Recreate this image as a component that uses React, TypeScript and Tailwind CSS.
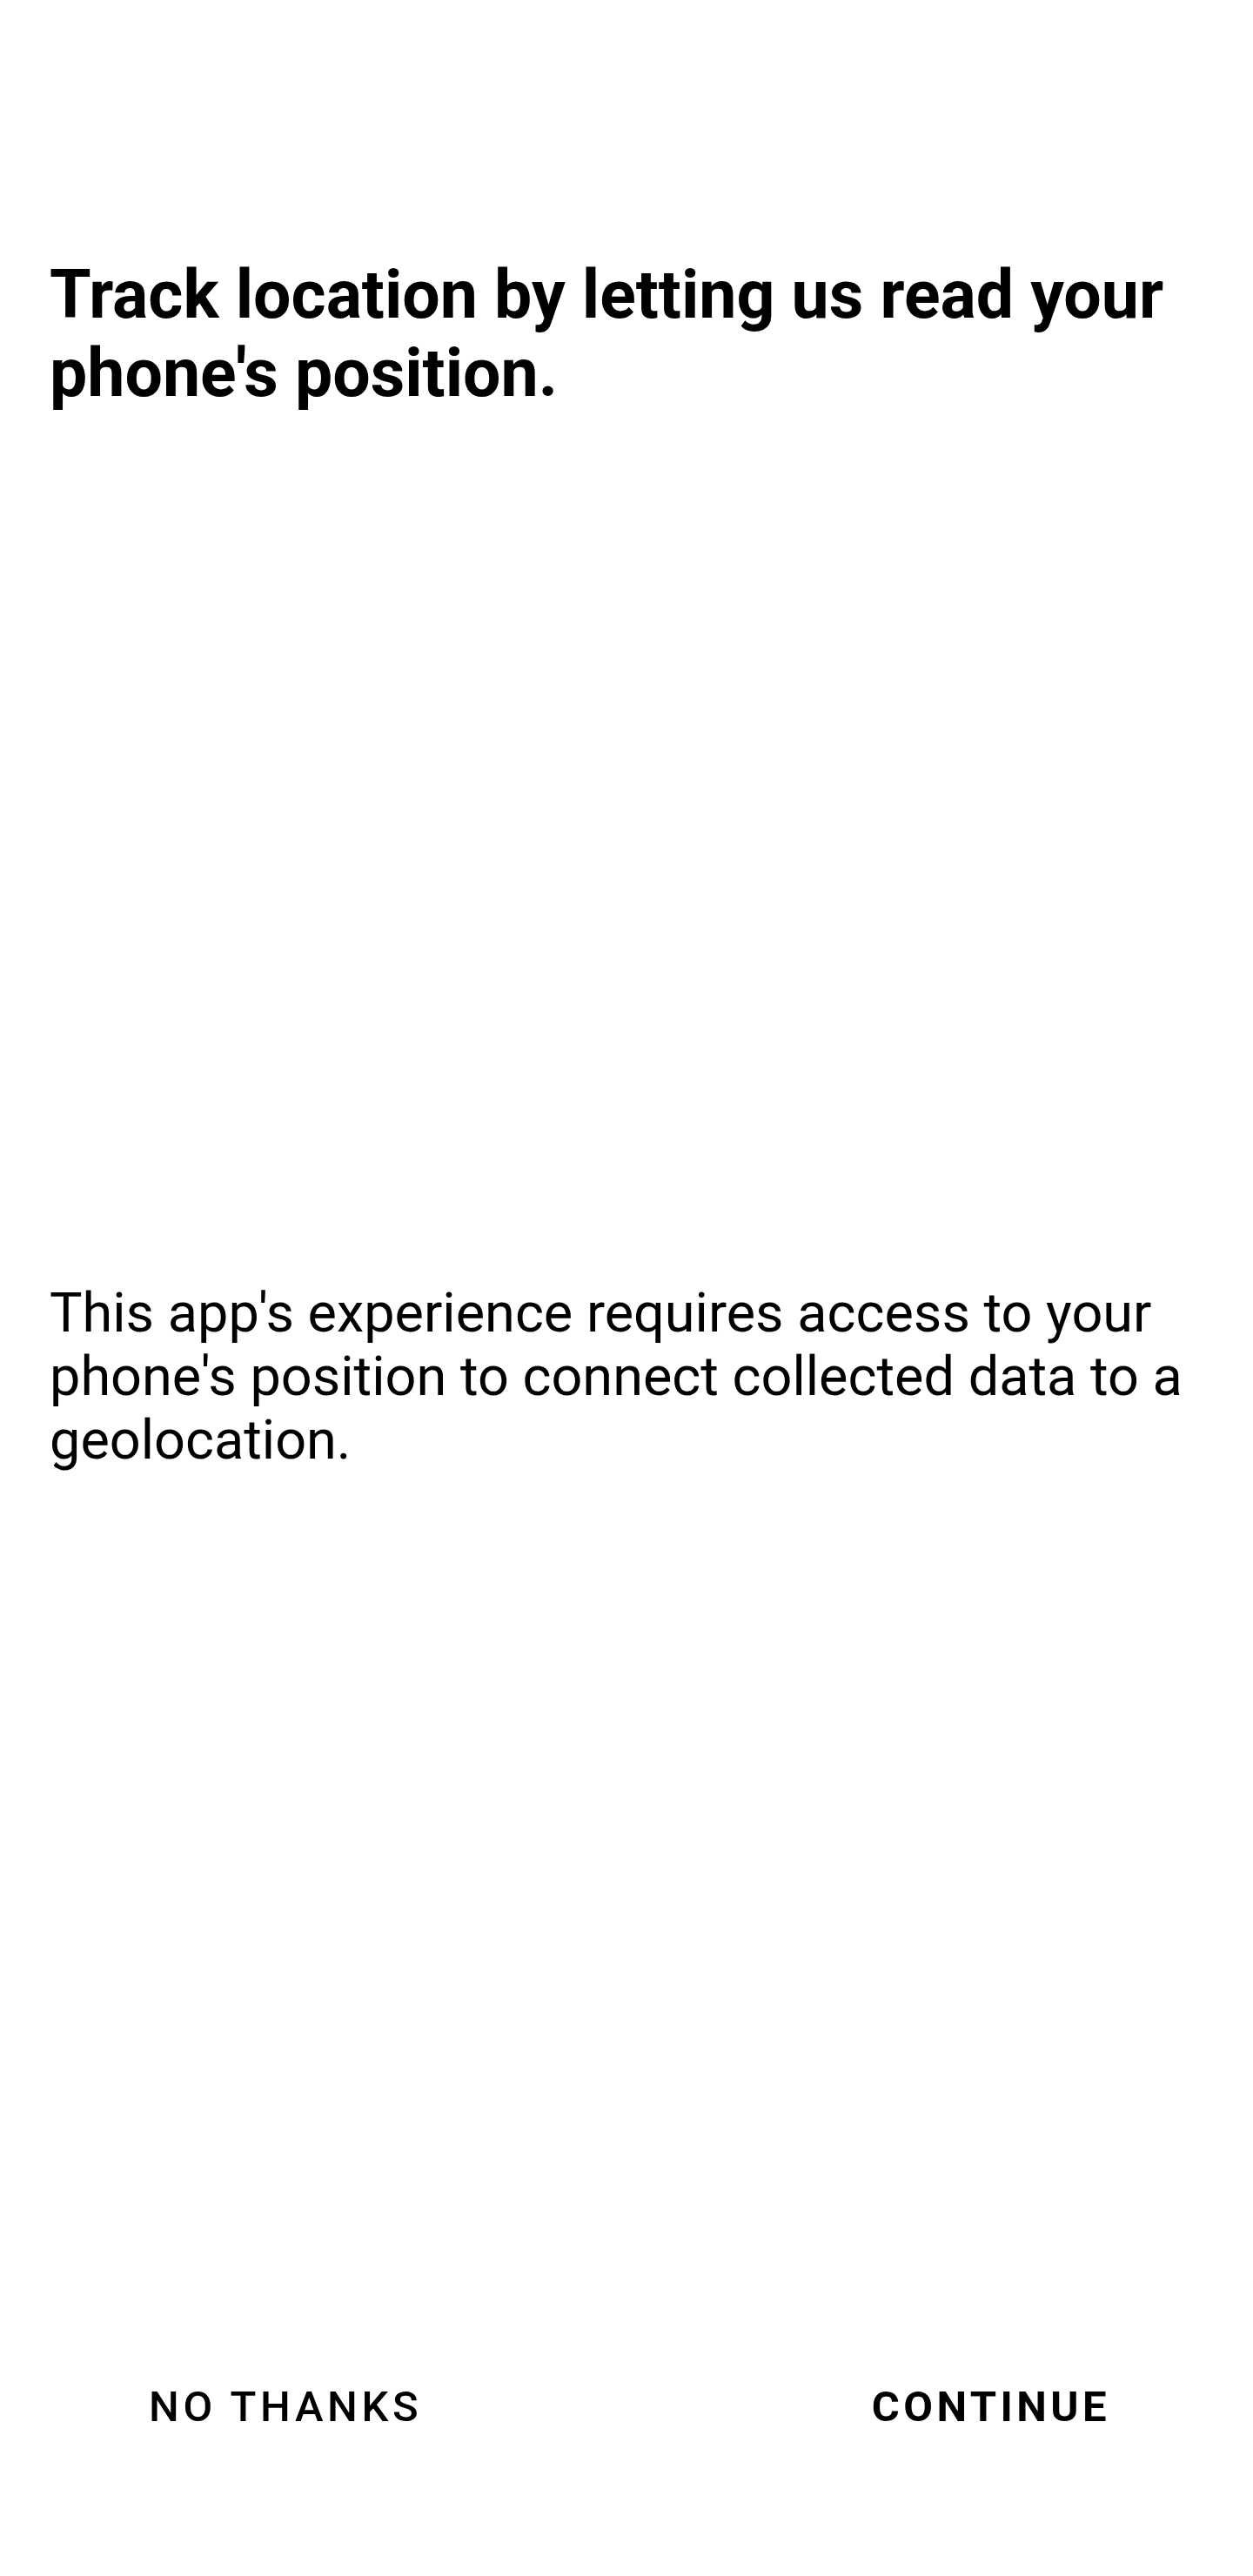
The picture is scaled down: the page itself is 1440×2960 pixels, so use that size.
export default function App() {
  return (
    <div className="w-[1440px] h-[2960px] bg-white flex flex-col font-['Roboto',sans-serif] text-black">
      {/* Header */}
      <h1 className="pt-[294px] px-[57px] text-[77px] leading-[90px] font-bold">
        Track location by letting us read your phone's position.
      </h1>

      {/* Explanation */}
      <p className="mt-[998px] px-[57px] text-[63px] leading-[73px] font-normal">
        This app's experience requires access to your phone's position to connect collected data to a geolocation.
      </p>

      {/* Actions */}
      <div className="mt-auto mb-[166px] flex items-center justify-between pl-[171px] pr-[164px]">
        <button className="text-[49px] leading-[57px] tracking-[0.095em] font-medium uppercase">
          No thanks
        </button>
        <button className="text-[49px] leading-[57px] tracking-[0.09em] font-bold uppercase">
          Continue
        </button>
      </div>
    </div>
  )
}
